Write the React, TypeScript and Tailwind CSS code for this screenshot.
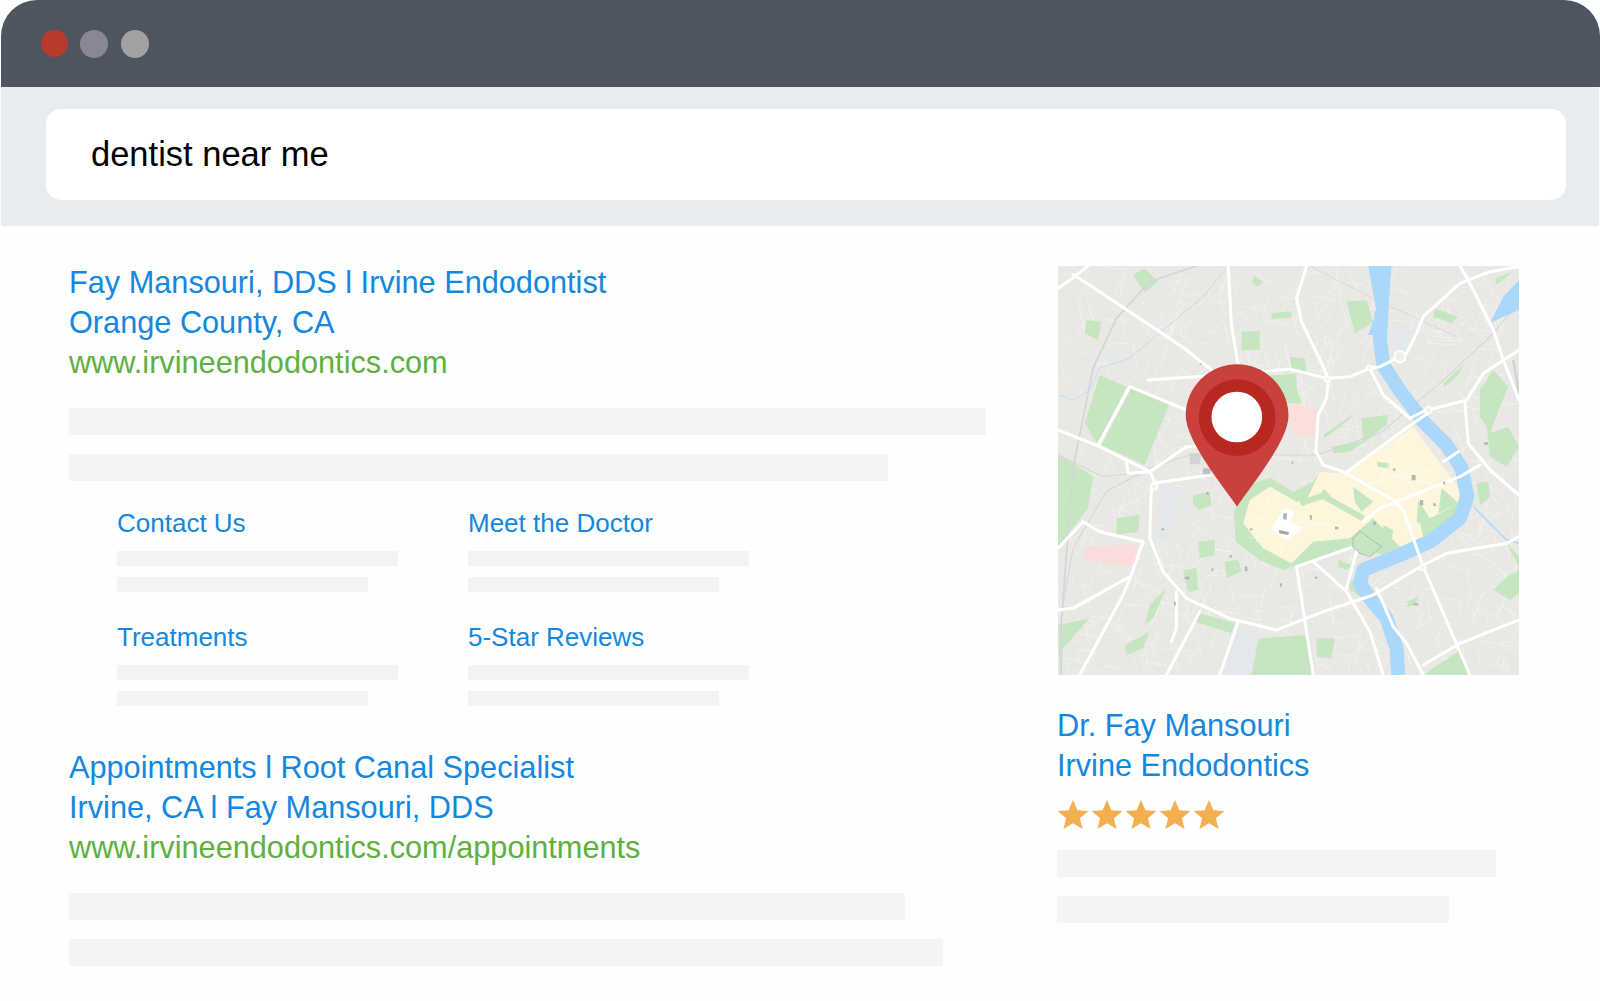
const ROADS_MAJOR = [
  "M85 100 L135 65 L175 33",
  "M130 58 L300 170 L390 230 L470 285 L545 345",
  "M595 33 L605 210 L625 330",
  "M830 33 L800 130 L815 200 L880 335 L895 370",
  "M355 375 L540 362",
  "M700 350 L780 342 L890 370 L960 365 L1020 340 L1050 335 L1130 295 L1160 235 L1180 185 L1290 85 L1380 50 L1467 35",
  "M1290 33 L1320 85 L1390 225 L1420 315 L1467 435",
  "M895 385 L890 430 L865 480 L858 590 L880 630 L940 650 L1090 735 L1120 765 L1180 935 L1320 1260",
  "M1020 340 L1060 420 L1140 490 L1195 462",
  "M1195 465 L1310 435 L1360 355 L1467 285",
  "M1305 445 L1315 565 L1380 645 L1467 720",
  "M85 525 L210 575 L360 650 L380 690",
  "M300 395 L470 465",
  "M300 395 L205 570",
  "M290 620 L295 655 L360 650 L470 575 L510 575",
  "M370 685 L540 660",
  "M945 655 L1150 505 L1200 470",
  "M1000 800 L1050 760 L1290 665 L1350 630",
  "M800 935 L985 870",
  "M85 880 L160 800 L210 830 L340 860 L305 960 L280 1020 L150 1260",
  "M85 1065 L130 1060 L300 965",
  "M365 690 L360 850 L400 950 L470 1030 L600 1090 L740 1125 L880 1070 L1030 1020 L1180 930 L1250 895 L1430 865 L1467 845",
  "M800 935 L850 1260",
  "M850 920 L950 1010 L1020 1130 L1060 1260",
  "M985 870 L950 1000",
  "M1040 1000 L1090 1115 L1130 1165 L1180 1260",
  "M1180 1230 L1290 1165 L1467 1095",
  "M510 1070 L410 1260",
  "M625 1100 L570 1260",
  "M440 1010 L440 1120 L425 1160",
  "M1240 620 L1285 590",
];
const GREY_SPOTS: [number, number, number, number][] = [
  [530,710,6,10],[660,820,8,6],[840,780,6,14],[915,815,10,8],[1030,800,8,10],[1145,660,12,16],[1240,680,6,8],[395,820,8,6],[545,940,6,8],[645,935,8,14],[465,965,14,8],[750,985,6,10],[855,965,8,6],[1150,1045,16,6],[433,1040,5,12],[785,620,6,6],[1362,562,12,7],[510,325,6,4],[1210,745,8,8],[1170,735,10,16],[1090,640,6,8],[600,900,6,8],
];
const STAR = "M10 0.6 L12.7 7 L19.6 7.5 L14.3 12 L16 18.8 L10 15.1 L4 18.8 L5.7 12 L0.4 7.5 L7.3 7 Z";

function buildStreets() {
  const out: string[] = [];
  let s = 12345;
  const r = () => ((s = (s * 1103515245 + 12345) % 2147483648) / 2147483648);
  const dirs = [0.12, 0.62, 1.3, 1.9, 2.45];
  for (let i = 0; i < 850; i++) {
    const x = 85 + r() * 1382;
    const y = 33 + r() * 1227;
    const a = dirs[Math.floor(r() * dirs.length)] + (r() - 0.5) * 0.25;
    const l = 25 + r() * 70;
    out.push(`M${x.toFixed(0)} ${y.toFixed(0)} L${(x + Math.cos(a) * l).toFixed(0)} ${(y + Math.sin(a) * l).toFixed(0)}`);
  }
  return out.join(" ");
}
const STREETS = buildStreets();

function MapPic() {
  return (
    <svg viewBox="85 33 1382 1227" className="block w-[461px] h-[409px]" preserveAspectRatio="none">
      <rect x="85" y="33" width="1382" height="1227" fill="#e9e8e5" />
      <path d={STREETS} fill="none" stroke="#f6f6f5" strokeWidth="1.7" />
      {/* parks */}
      <g fill="#c6e6c1">
        <path d="M210 360 L290 395 L205 570 L165 505 Z" />
        <path d="M305 400 L420 445 L345 630 L215 570 Z" />
        <path d="M85 600 L130 625 L190 665 L175 760 L120 830 L85 880 Z" />
        <path d="M310 60 L345 40 L385 80 L345 112 Z" />
        <path d="M170 195 L215 200 L205 255 L165 235 Z" />
        <path d="M635 230 L690 228 L690 285 L635 285 Z" />
        <path d="M670 60 L700 80 L685 95 L668 82 Z" />
        <path d="M780 305 L825 310 L830 350 L785 345 Z" />
        <path d="M725 175 L785 168 L785 188 L725 192 Z" />
        <path d="M950 140 L1010 135 L1030 200 L975 235 Z" />
        <path d="M1215 160 L1285 185 L1265 205 L1210 185 Z" />
        <path d="M720 362 L800 355 L800 400 L815 445 L770 445 Z" />
        <path d="M880 540 L970 478 L962 490 L885 550 Z" />
        <path d="M995 490 L1075 480 L1070 510 L1000 565 Z" />
        <path d="M905 575 L1010 555 L960 590 L910 595 Z" />
        <path d="M1350 405 L1390 345 L1435 395 L1410 455 L1380 535 L1435 515 L1467 575 L1430 635 L1380 605 L1370 515 L1350 485 Z" />
        <path d="M1340 685 L1375 680 L1380 725 L1350 750 Z" />
        <path d="M1390 1005 L1430 965 L1467 945 L1467 1015 L1440 1035 Z" />
        <path d="M1430 865 L1467 905 L1467 935 Z" />
        <path d="M1395 70 L1450 50 L1400 90 Z" />
        <path d="M1240 385 L1300 330 L1285 360 L1245 395 Z" />
        <path d="M490 720 L540 710 L545 750 L510 765 L490 750 Z" />
        <path d="M505 860 L555 855 L555 900 L510 910 Z" />
        <path d="M585 920 L625 915 L635 950 L590 970 Z" />
        <path d="M460 945 L500 940 L505 1005 L475 1010 Z" />
        <path d="M260 790 L330 780 L325 830 L260 840 Z" />
        <path d="M360 1050 L410 1000 L370 1090 L345 1110 Z" />
        <path d="M285 1170 L360 1130 L340 1180 L290 1200 Z" />
        <path d="M130 1045 L185 1015 L135 1040 Z" />
        <path d="M510 1075 L615 1105 L605 1135 L495 1100 Z" />
        <path d="M685 1150 L830 1140 L850 1260 L660 1260 Z" />
        <path d="M1180 1260 L1290 1185 L1320 1260 Z" />
        <path d="M860 1150 L915 1150 L905 1210 L860 1205 Z" />
        <path d="M180 1090 L85 1110 L90 1260 L100 1180 Z" />
        <path d="M955 970 L985 990 L1000 1030 L960 1005 Z" />
        <path d="M925 915 L965 930 L950 945 L925 935 Z" />
        <path d="M1090 340 L1140 420 L1120 410 L1085 360 Z" />
        <path d="M1130 1040 L1165 1025 L1160 1045 L1135 1055 Z" />
      </g>
      {/* pink + blue-grey districts */}
      <path d="M780 445 L860 462 L855 545 L800 540 L775 500 Z" fill="#fbdfdc" />
      <path d="M165 875 L325 868 L315 935 L160 915 Z" fill="#fbdcdc" />
      <path d="M395 690 L465 710 L430 770 L410 860 L375 850 Z" fill="#e3e8ec" />
      <path d="M610 1120 L690 1130 L665 1260 L570 1260 Z" fill="#e3e8ec" />
      <path d="M1095 215 L1145 225 L1130 285 L1095 280 Z" fill="#e3e8ec" />
      {/* old town ring */}
      <path d="M612 770 L660 690 L720 668 L790 710 L850 680 L870 650 L945 655 L1000 790 L1090 730 L1170 790 L1240 755 L1290 705 L1330 745 L1300 800 L1250 830 L1140 880 L1060 900 L980 870 L890 900 L760 945 L690 915 L618 860 Z" fill="#c6e6c1" />
      {/* yellow */}
      <path d="M640 805 L660 735 L720 695 L800 740 L830 735 L870 650 L945 655 L1150 515 L1290 705 L1285 745 L1230 775 L1170 805 L1180 845 L1110 875 L1030 790 L960 850 L850 860 L785 925 L700 880 Z" fill="#fdf6dc" />
      <path d="M970 695 L1030 740 L995 770 L975 740 Z" fill="#c6e6c1" />
      <path d="M812 745 L878 722 L1000 790" fill="none" stroke="#c6e6c1" strokeWidth="18" />
      <path d="M1160 800 L1165 735 L1200 790 L1190 820 Z" fill="#c6e6c1" />
      <path d="M1225 775 L1235 700 L1270 730 L1285 745 Z" fill="#c6e6c1" />
      <path d="M1040 620 L1080 625 L1075 640 L1045 635 Z" fill="#c6e6c1" />
      <path d="M1060 810 L1090 825 L1085 860 L1060 845 Z" fill="#c6e6c1" />
      <path d="M880 700 L905 725 L870 735 Z" fill="#c6e6c1" />
      <path d="M680 790 L960 815 M720 720 L680 860 M780 760 L750 900 M1000 640 L1260 700 M1060 590 L1200 760 M1120 540 L1040 700 M1180 590 L1080 770 M950 700 L1220 640 M660 850 L900 800" fill="none" stroke="#ffffff" strokeWidth="2" opacity="0.85" />
      <path d="M765 760 L795 770 L780 800 L815 820 L775 855 L722 825 Z" fill="#ffffff" />
      <path d="M748 825 L778 832 L775 840 L748 835 Z" fill="#a3a3a3" />
      <path d="M760 775 L772 775 L770 795 L760 792 Z" fill="#b4b4b4" />
      {/* creek */}
      <path d="M85 420 L130 435 L175 410 L210 340 L300 310 L400 225 L520 125 L585 45" fill="none" stroke="#a9d8fb" strokeWidth="2" />
      {/* rail */}
      <g fill="none" stroke="#d3d5d8">
        <path d="M500 33 L360 80 L260 190 L190 340 L130 640 L95 1100 L95 1260" strokeWidth="5" />
        <path d="M100 1050 L130 880 L230 710 L360 640 L480 600 L860 600 L1050 535 L1230 385 L1380 245 L1467 145" strokeWidth="3" />
        <path d="M85 600 L220 665 L350 650" strokeWidth="3" />
        <path d="M840 33 L1050 140 L1150 185 L1280 245" strokeWidth="2.5" />
        <path d="M1450 315 L1467 415" strokeWidth="9" />
      </g>
      {/* river */}
      <path d="M1015 33 L1085 33 L1075 170 L1070 240 L1015 240 L1040 170 Z" fill="#a9d8fb" />
      <path d="M1055 170 L1050 250 L1060 330 L1105 400 L1180 500 L1250 570 L1295 640 L1312 725 L1290 790 L1200 860 L1110 900 L1000 945 L990 985 L1020 1030 L1070 1090 L1100 1180 L1105 1260" fill="none" stroke="#a9d8fb" strokeWidth="42" strokeLinejoin="round" />
      <path d="M1380 205 L1420 125 L1467 75 L1467 165 L1420 185 Z" fill="#a9d8fb" />
      <path d="M1330 755 L1430 855 L1467 865" fill="none" stroke="#a9d8fb" strokeWidth="4" />
      {/* main roads */}
      <g fill="none" stroke="#ffffff" strokeWidth="9" strokeLinejoin="round" strokeLinecap="round">
        {ROADS_MAJOR.map((d, i) => <path key={i} d={d} />)}
      </g>
      <g fill="#eef3ea" stroke="#ffffff" strokeWidth="5">
        <circle cx="892" cy="372" r="8" />
        <circle cx="1018" cy="338" r="7" />
        <circle cx="1110" cy="305" r="17" />
        <circle cx="1195" cy="466" r="10" />
        <circle cx="373" cy="695" r="9" />
        <circle cx="1178" cy="938" r="8" />
      </g>
      <g fill="#b4b4b4">
        {GREY_SPOTS.map(([x, y, w, h], i) => <rect key={i} x={x} y={y} width={w} height={h} />)}
      </g>
      <path d="M480 595 L515 595 L510 628 L480 628 Z" fill="#d2d3d3" />
      <path d="M520 640 L545 640 L540 658 L518 658 Z" fill="#bfc0c0" />
      {/* castle */}
      <path d="M970 850 L990 828 L1020 850 L1055 875 L1020 905 L990 895 L968 875 Z" fill="#c6e6c1" stroke="#a7a79d" strokeWidth="3" strokeDasharray="4 3" />
      {/* pin */}
      <path d="M622 755 C590 705 468 560 468 482 C468 397 537 328 622 328 C707 328 776 397 776 482 C776 560 654 705 622 755 Z" fill="#ca403d" />
      <circle cx="622" cy="488" r="115" fill="#b92722" />
      <circle cx="621" cy="486" r="76" fill="#ffffff" />
    </svg>
  );
}

function Bar({ w, h = "h-[27px]", mt }: { w: string; h?: string; mt: string }) {
  return <div className={`${w} ${h} ${mt} bg-[#f4f4f4]`} />;
}

function Sub({ title, mt }: { title: string; mt: string }) {
  return (
    <div className={mt}>
      <div className="text-[26px] leading-[34px] text-[#1487de]">{title}</div>
      <div className="mt-[11px] h-[15px] w-[281px] bg-[#f3f3f3]" />
      <div className="mt-[11px] h-[15px] w-[251px] bg-[#f3f3f3]" />
    </div>
  );
}

function Result({ lines, url, mt }: { lines: string[]; url: string; mt: string }) {
  return (
    <div className={`${mt} text-[30.7px] leading-[40.2px] text-[#1487de]`}>
      {lines.map((l) => <div key={l}>{l}</div>)}
      <div className="text-[#5fb040]">{url}</div>
    </div>
  );
}

export default function App() {
  return (
    <div className="w-[1600px] h-[1001px] bg-[#fdfefe] overflow-hidden font-['Liberation_Sans',Arial,sans-serif]">
      <div className="ml-[1px] h-[87px] rounded-t-[36px] bg-[#4f5560] pl-[40px] flex items-center">
        <span className="w-[27px] h-[27px] rounded-full bg-[#b73b2c]" />
        <span className="ml-[12px] w-[28px] h-[28px] rounded-full bg-[#8a8795]" />
        <span className="ml-[13px] w-[28px] h-[28px] rounded-full bg-[#a2a2a2]" />
      </div>
      <div className="ml-[1px] mr-[1px] h-[139px] bg-[#e8ecef] pl-[45px] pr-[33px] pt-[22px]">
        <div className="h-[91px] rounded-[15px] bg-white pl-[45px] flex items-center text-[34.5px] text-black">dentist near me</div>
      </div>
      <div className="flex">
        <div className="w-[1057px] pl-[69px]">
          <Result mt="mt-[37px]" lines={["Fay Mansouri, DDS l Irvine Endodontist", "Orange County, CA"]} url="www.irvineendodontics.com" />
          <Bar w="w-[917px]" mt="mt-[24px]" />
          <Bar w="w-[819px]" mt="mt-[19px]" />
          <div className="ml-[48px] grid grid-cols-[351px_351px]">
            <Sub mt="mt-[25px]" title="Contact Us" />
            <Sub mt="mt-[25px]" title="Meet the Doctor" />
            <Sub mt="mt-[28px]" title="Treatments" />
            <Sub mt="mt-[28px]" title="5-Star Reviews" />
          </div>
          <Result mt="mt-[42px]" lines={["Appointments l Root Canal Specialist", "Irvine, CA l Fay Mansouri, DDS"]} url="www.irvineendodontics.com/appointments" />
          <Bar w="w-[836px]" mt="mt-[25px]" />
          <Bar w="w-[874px]" mt="mt-[19px]" />
        </div>
        <div className="pt-[40px]">
          <div className="ml-[1px]"><MapPic /></div>
          <div className="mt-[31px] text-[30.7px] leading-[40.2px] text-[#1487de]">
            <div>Dr. Fay Mansouri</div>
            <div>Irvine Endodontics</div>
          </div>
          <div className="mt-[13px] flex gap-[2px]">
            {[0, 1, 2, 3, 4].map((i) => (
              <svg key={i} viewBox="0 0 20 19.4" className="w-[32px] h-[31px]"><path d={STAR} fill="#f2ae4f" /></svg>
            ))}
          </div>
          <Bar w="w-[439px]" mt="mt-[20px]" />
          <Bar w="w-[392px]" mt="mt-[19px]" />
        </div>
      </div>
    </div>
  );
}
